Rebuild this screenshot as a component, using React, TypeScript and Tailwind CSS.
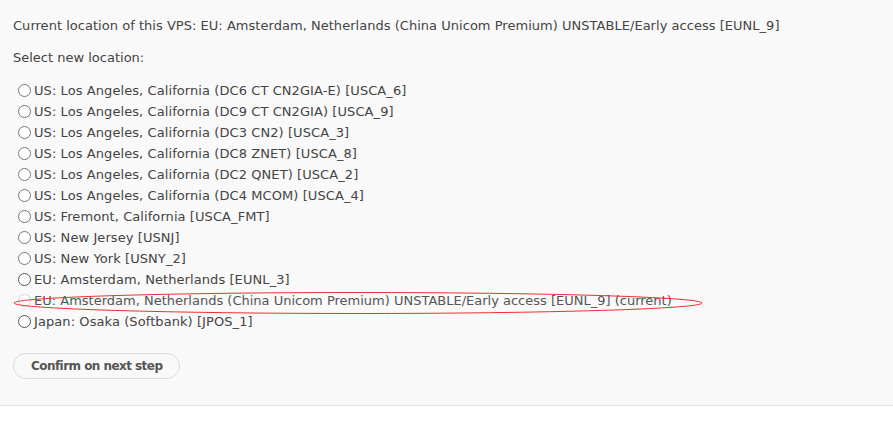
import React from "react";

const options = [
  "US: Los Angeles, California (DC6 CT CN2GIA-E) [USCA_6]",
  "US: Los Angeles, California (DC9 CT CN2GIA) [USCA_9]",
  "US: Los Angeles, California (DC3 CN2) [USCA_3]",
  "US: Los Angeles, California (DC8 ZNET) [USCA_8]",
  "US: Los Angeles, California (DC2 QNET) [USCA_2]",
  "US: Los Angeles, California (DC4 MCOM) [USCA_4]",
  "US: Fremont, California [USCA_FMT]",
  "US: New Jersey [USNJ]",
  "US: New York [USNY_2]",
  "EU: Amsterdam, Netherlands [EUNL_3]",
  "EU: Amsterdam, Netherlands (China Unicom Premium) UNSTABLE/Early access [EUNL_9] (current)",
  "Japan: Osaka (Softbank) [JPOS_1]",
];

export default function App() {
  return (
    <div className="w-[893px] h-[421px] bg-white" style={{ fontFamily: '"DejaVu Sans", Verdana, sans-serif' }}>
      <div className="relative bg-[#f9f9f9] border-b border-[#e2e2e2] h-[406px] px-[13px] pt-[15px] text-[13px] text-[#444]">
        <p className="leading-[21px] tracking-[0.03px]">
          Current location of this VPS: EU: Amsterdam, Netherlands (China Unicom Premium) UNSTABLE/Early access [EUNL_9]
        </p>
        <p className="leading-[21px] mt-[11px]">Select new location:</p>
        <div className="mt-[12px] flex flex-col tracking-[0.08px]">
          {options.map((o, i) => {
            const disabled = i === 10;
            const dark = i === 9 || i === 11;
            return (
              <label key={i} className="flex items-center h-[21px] leading-[21px]">
                <span
                  className={
                    "ml-[5px] mr-[3px] w-[13px] h-[13px] rounded-full border bg-white shrink-0 " +
                    (disabled ? "border-[#d4d4d4]" : dark ? "border-[#555]" : "border-[#777]")
                  }
                />
                <span className={disabled ? "text-[#555] tracking-[0px]" : ""}>{o}</span>
              </label>
            );
          })}
        </div>
        <button className="mt-[21px] h-[26px] px-[17px] rounded-full border border-[#dcdcdc] bg-[#f9f9f9] text-[12px] tracking-[-0.55px] font-bold text-[#555]">
          Confirm on next step
        </button>
        <svg className="absolute left-[12px] top-[290px] pointer-events-none" width="692" height="26" viewBox="0 0 692 26">
          <ellipse cx="346" cy="13" rx="344" ry="10.5" fill="none" stroke="#f03030" strokeWidth="1" />
        </svg>
      </div>
    </div>
  );
}
